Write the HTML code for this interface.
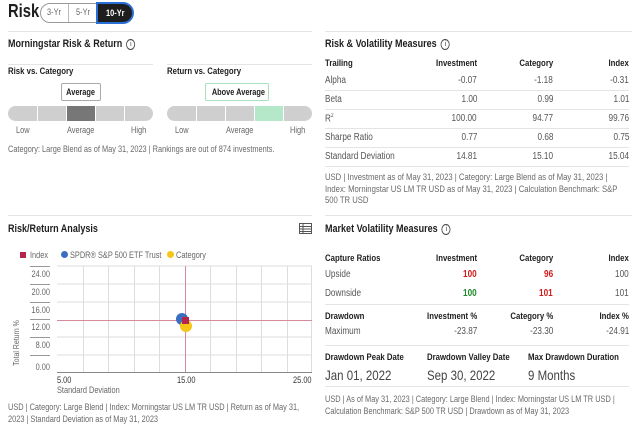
<!DOCTYPE html>
<html><head><meta charset="utf-8"><style>
*{margin:0;padding:0;box-sizing:border-box}
body{width:640px;height:436px;background:#fff;position:relative;overflow:hidden;font-family:"Liberation Sans",sans-serif;color:#1e1e1e}
.a{position:absolute;white-space:nowrap}
.n{transform:scaleX(.82);transform-origin:0 50%}
.nr{transform:scaleX(.82);transform-origin:100% 50%}
.nc{transform:scaleX(.82);transform-origin:50% 50%}
.b{font-weight:bold}
.g{color:#666}
.s{font-size:9px;color:#6a6a6a}
.hl{position:absolute;height:1px;background:#e4e4e4}
.info{display:inline-block;width:11px;height:11px;border:1px solid #444;border-radius:50%;font-size:7px;line-height:9px;text-align:center;font-weight:normal;vertical-align:1px;margin-left:5px}
.seg{position:absolute;top:106px;height:15px;background:#cfcfcf}
.row{position:relative;height:19px;border-bottom:1px solid #e4e4e4}
.row span{top:3px}
</style></head><body>
<div class="a b n" style="left:8px;top:1px;font-size:18px">Risk</div>
<div class="a" style="left:40px;top:3px;width:93px;height:20px;border:1px solid #999;border-radius:10px"></div>
<div class="a g nc" style="left:40px;top:7px;width:28px;text-align:center;font-size:9px">3-Yr</div>
<div class="a" style="left:68px;top:4px;width:1px;height:18px;background:#bbb"></div>
<div class="a g nc" style="left:69px;top:7px;width:28px;text-align:center;font-size:9px">5-Yr</div>
<div class="a b" style="left:96px;top:2px;width:38px;height:22px;background:#1e1e1e;border:2px solid #2a6fd6;border-radius:0 11px 11px 0;color:#fff;font-size:9px;text-align:center;line-height:18px"><span style="display:inline-block" class="nc">10-Yr</span></div>

<div class="hl" style="left:8px;top:31px;width:304px"></div>
<div class="hl" style="left:325px;top:31px;width:307px"></div>

<div class="a b n" style="left:8px;top:38px;font-size:11px">Morningstar Risk &amp; Return<span class="info">i</span></div>
<div class="hl" style="left:8px;top:64px;width:145px"></div>
<div class="hl" style="left:167px;top:64px;width:145px"></div>
<div class="a b n" style="left:8px;top:66px;font-size:9.5px">Risk vs. Category</div>
<div class="a b n" style="left:167px;top:66px;font-size:9.5px">Return vs. Category</div>

<div class="a b" style="left:61px;top:83px;width:40px;height:18px;border:1px solid #aaa;border-radius:2px;font-size:9px;text-align:center;line-height:16px"><span style="display:inline-block" class="nc">Average</span></div>
<div class="seg" style="left:8px;width:29px;border-radius:8px 0 0 8px"></div>
<div class="seg" style="left:38px;width:28px"></div>
<div class="seg" style="left:67px;width:28px;background:#777"></div>
<div class="seg" style="left:96px;width:28px"></div>
<div class="seg" style="left:125px;width:28px;border-radius:0 8px 8px 0"></div>
<div class="a g n" style="left:16px;top:125px;font-size:9px">Low</div>
<div class="a g n" style="left:67px;top:125px;font-size:9px">Average</div>
<div class="a g n" style="left:131px;top:125px;font-size:9px">High</div>

<div class="a b" style="left:205px;top:83px;width:64px;height:18px;border:1px solid #a8e0bd;border-radius:2px;font-size:9px;text-align:center;line-height:16px"><span style="display:inline-block" class="nc">Above Average</span></div>
<div class="seg" style="left:167px;width:29px;border-radius:8px 0 0 8px"></div>
<div class="seg" style="left:197px;width:28px"></div>
<div class="seg" style="left:226px;width:28px"></div>
<div class="seg" style="left:255px;width:28px;background:#b5e8c8"></div>
<div class="seg" style="left:284px;width:28px;border-radius:0 8px 8px 0"></div>
<div class="a g n" style="left:175px;top:125px;font-size:9px">Low</div>
<div class="a g n" style="left:226px;top:125px;font-size:9px">Average</div>
<div class="a g n" style="left:290px;top:125px;font-size:9px">High</div>
<div class="a s n" style="left:8px;top:144px">Category: Large Blend as of May 31, 2023 | Rankings are out of 874 investments.</div>

<!-- right top table -->
<div class="a b n" style="left:325px;top:38px;font-size:11px">Risk &amp; Volatility Measures<span class="info">i</span></div>
<div style="position:absolute;left:325px;top:58px;width:304px;font-size:9.5px">
<div style="position:relative;height:14px" class="b"><span class="a n" style="left:0">Trailing</span><span class="a nr" style="right:152px">Investment</span><span class="a nr" style="right:76px">Category</span><span class="a nr" style="right:0">Index</span></div>
</div>
<div style="position:absolute;left:325px;top:72px;width:304px;font-size:10px;color:#555">
<div class="row"><span class="a n" style="left:0">Alpha</span><span class="a nr" style="right:152px">-0.07</span><span class="a nr" style="right:76px">-1.18</span><span class="a nr" style="right:0">-0.31</span></div>
<div class="row"><span class="a n" style="left:0">Beta</span><span class="a nr" style="right:152px">1.00</span><span class="a nr" style="right:76px">0.99</span><span class="a nr" style="right:0">1.01</span></div>
<div class="row"><span class="a n" style="left:0">R<sup style="font-size:6px">2</sup></span><span class="a nr" style="right:152px">100.00</span><span class="a nr" style="right:76px">94.77</span><span class="a nr" style="right:0">99.76</span></div>
<div class="row"><span class="a n" style="left:0">Sharpe Ratio</span><span class="a nr" style="right:152px">0.77</span><span class="a nr" style="right:76px">0.68</span><span class="a nr" style="right:0">0.75</span></div>
<div class="row"><span class="a n" style="left:0">Standard Deviation</span><span class="a nr" style="right:152px">14.81</span><span class="a nr" style="right:76px">15.10</span><span class="a nr" style="right:0">15.04</span></div>
</div>
<div class="a s" style="left:325px;top:171px;line-height:11.5px;font-size:9.4px;white-space:normal;width:370px;transform:scaleX(.82);transform-origin:0 0">USD | Investment as of May 31, 2023 | Category: Large Blend as of May 31, 2023 | Index: Morningstar US LM TR USD as of May 31, 2023 | Calculation Benchmark: S&amp;P 500 TR USD</div>

<div class="hl" style="left:8px;top:215px;width:304px"></div>
<div class="hl" style="left:325px;top:215px;width:307px"></div>

<!-- chart -->
<div class="a b n" style="left:8px;top:223px;font-size:11px">Risk/Return Analysis</div>
<svg class="a" style="left:299px;top:223px" width="13" height="11"><rect x="0.5" y="0.5" width="12" height="10" fill="none" stroke="#555"/><path d="M0 3.5H13M0 6H13M0 8.5H13M4 0V11" stroke="#555" stroke-width="1"/></svg>
<div class="a" style="left:20px;top:252px;width:6px;height:6px;background:#b5244a"></div>
<div class="a g n" style="left:30px;top:250px;font-size:9px">Index</div>
<div class="a" style="left:61px;top:251px;width:7px;height:7px;border-radius:50%;background:#3a6fbf"></div>
<div class="a g n" style="left:70px;top:250px;font-size:9px">SPDR® S&amp;P 500 ETF Trust</div>
<div class="a" style="left:167px;top:251px;width:7px;height:7px;border-radius:50%;background:#f5c518"></div>
<div class="a g n" style="left:176px;top:250px;font-size:9px">Category</div>
<svg class="a" style="left:0;top:260px" width="320" height="120">
<g stroke="#ddd" stroke-width="1">
<path d="M57 6H312M57 24H312M57 42H312M57 77H312M57 95H312"/>
<path d="M83.5 6V112M108.5 6V112M134.5 6V112M159.5 6V112M210.5 6V112M236.5 6V112M261.5 6V112M287.5 6V112M311.5 6V112"/>
</g>
<g stroke="#999"><path d="M30 6.5H50M30 24.5H50M30 42.5H50M30 59.5H50M30 77.5H50M30 95.5H50"/></g>
<path d="M57 112.5H312" stroke="#888"/>
<path d="M57 60.5H312M185.5 6V112" stroke="#d88a9a"/>
<circle cx="182" cy="59" r="6" fill="#3a6fbf"/>
<circle cx="186" cy="66" r="6" fill="#f5c518"/>
<rect x="182" y="57" width="7" height="7" fill="#b5244a"/>
</svg>
<div class="a g nr" style="left:20px;top:269px;width:30px;text-align:right;font-size:9px">24.00</div>
<div class="a g nr" style="left:20px;top:287px;width:30px;text-align:right;font-size:9px">20.00</div>
<div class="a g nr" style="left:20px;top:305px;width:30px;text-align:right;font-size:9px">16.00</div>
<div class="a g nr" style="left:20px;top:322px;width:30px;text-align:right;font-size:9px">12.00</div>
<div class="a g nr" style="left:20px;top:340px;width:30px;text-align:right;font-size:9px">8.00</div>
<div class="a g nr" style="left:20px;top:362px;width:30px;text-align:right;font-size:9px">0.00</div>
<div class="a g" style="left:-12px;top:338px;font-size:8.5px;transform:rotate(-90deg) scaleX(.82)">Total Return %</div>
<div class="a n" style="left:57px;top:375px;font-size:9px;color:#333">5.00</div>
<div class="a n" style="left:177px;top:375px;font-size:9px;color:#333">15.00</div>
<div class="a nr" style="right:328px;top:375px;font-size:9px;color:#333">25.00</div>
<div class="a g n" style="left:57px;top:385px;font-size:9px">Standard Deviation</div>
<div class="a s" style="left:8px;top:401px;line-height:12px;white-space:normal;width:372px;transform:scaleX(.82);transform-origin:0 0">USD | Category: Large Blend | Index: Morningstar US LM TR USD | Return as of May 31, 2023 | Standard Deviation as of May 31, 2023</div>

<!-- market volatility -->
<div class="a b n" style="left:325px;top:223px;font-size:11px">Market Volatility Measures<span class="info">i</span></div>
<div style="position:absolute;left:325px;top:253px;width:304px;font-size:9.5px">
<div style="position:relative;height:14px" class="b"><span class="a n" style="left:0">Capture Ratios</span><span class="a nr" style="right:152px">Investment</span><span class="a nr" style="right:76px">Category</span><span class="a nr" style="right:0">Index</span></div>
<div style="position:relative;height:19px;font-size:10px;color:#555"><span class="a n" style="left:0;top:2px">Upside</span><span class="a b nr" style="right:152px;top:2px;color:#d01c1c">100</span><span class="a b nr" style="right:76px;top:2px;color:#d01c1c">96</span><span class="a nr" style="right:0;top:2px">100</span></div>
<div style="position:relative;height:19px;font-size:10px;color:#555;border-bottom:1px solid #e4e4e4"><span class="a n" style="left:0;top:2px">Downside</span><span class="a b nr" style="right:152px;top:2px;color:#208a2a">100</span><span class="a b nr" style="right:76px;top:2px;color:#d01c1c">101</span><span class="a nr" style="right:0;top:2px">101</span></div>
<div style="position:relative;height:17px;margin-top:6px" class="b"><span class="a n" style="left:0">Drawdown</span><span class="a nr" style="right:152px">Investment %</span><span class="a nr" style="right:76px">Category %</span><span class="a nr" style="right:0">Index %</span></div>
<div style="position:relative;height:18px;font-size:10px;color:#555;border-bottom:1px solid #e4e4e4"><span class="a n" style="left:0;top:-2px">Maximum</span><span class="a nr" style="right:152px;top:-2px">-23.87</span><span class="a nr" style="right:76px;top:-2px">-23.30</span><span class="a nr" style="right:0;top:-2px">-24.91</span></div>
</div>
<div class="a b n" style="left:325px;top:352px;font-size:9.5px">Drawdown Peak Date</div>
<div class="a b n" style="left:427px;top:352px;font-size:9.5px">Drawdown Valley Date</div>
<div class="a b n" style="left:528px;top:352px;font-size:9.5px">Max Drawdown Duration</div>
<div class="a n" style="left:325px;top:367px;font-size:14px;color:#444">Jan 01, 2022</div>
<div class="a n" style="left:427px;top:367px;font-size:14px;color:#444">Sep 30, 2022</div>
<div class="a n" style="left:528px;top:367px;font-size:14px;color:#444">9 Months</div>
<div class="hl" style="left:325px;top:386px;width:304px"></div>
<div class="a s" style="left:325px;top:393px;line-height:12px;white-space:normal;width:370px;transform:scaleX(.82);transform-origin:0 0">USD | As of May 31, 2023 | Category: Large Blend | Index: Morningstar US LM TR USD | Calculation Benchmark: S&amp;P 500 TR USD | Drawdown as of May 31, 2023</div>
</body></html>
